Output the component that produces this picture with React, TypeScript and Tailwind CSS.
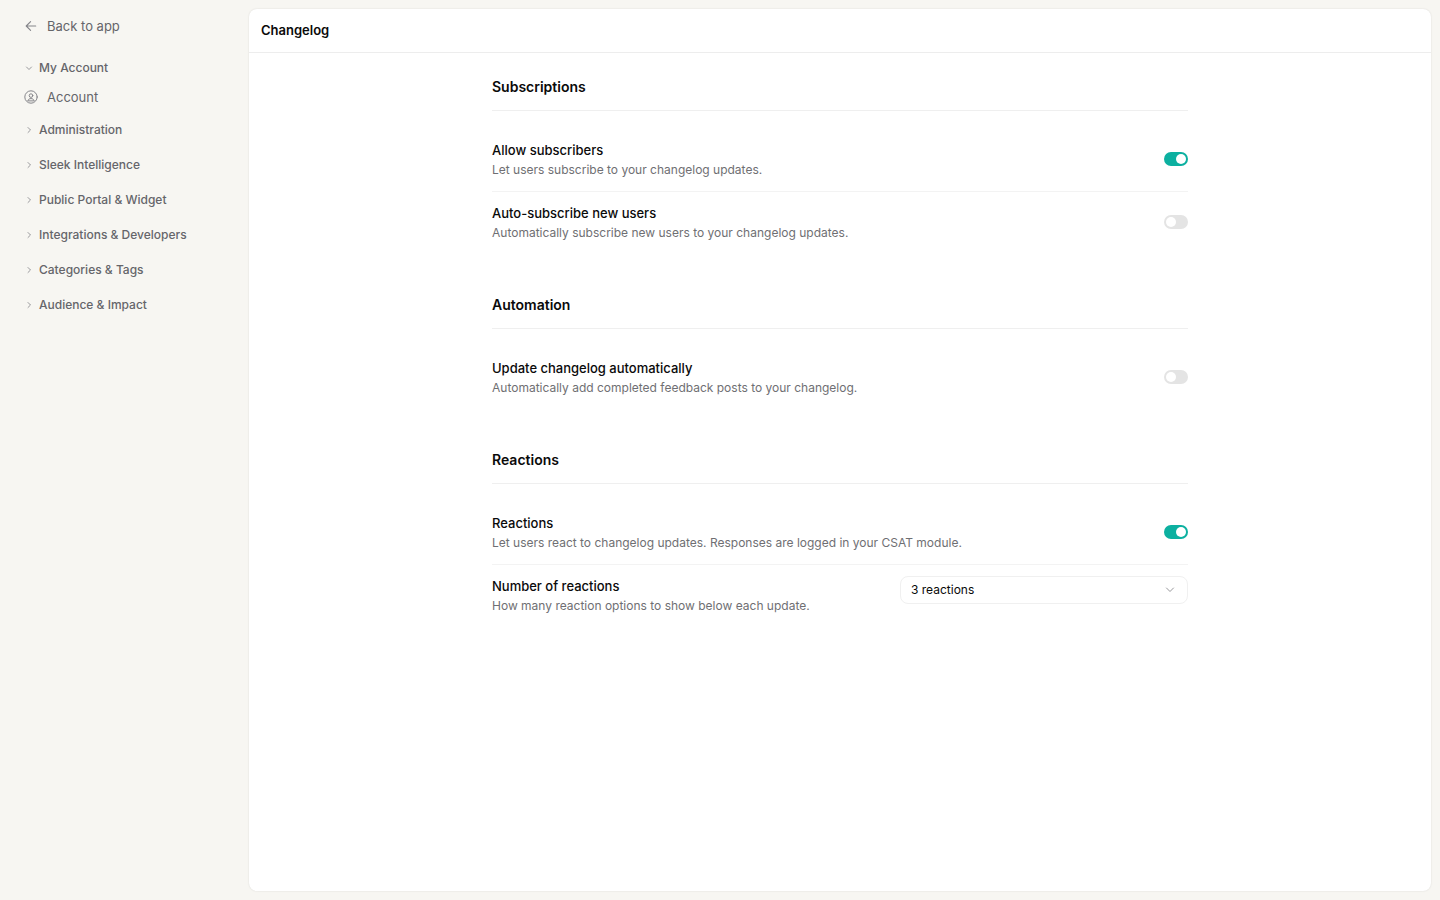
import { useState } from 'react';
import type { ReactNode } from 'react';

const groups = [
  'Administration',
  'Sleek Intelligence',
  'Public Portal & Widget',
  'Integrations & Developers',
  'Categories & Tags',
  'Audience & Impact',
];

function Chevron({ className, d = 'M4.8 3 7.8 6l-3 3' }: { className: string; d?: string }) {
  return (
    <svg viewBox="0 0 12 12" fill="none" stroke="currentColor" strokeLinecap="round" strokeLinejoin="round" className={className} aria-hidden="true">
      <path d={d} />
    </svg>
  );
}

function Sidebar() {
  return (
    <nav className="w-[249px] shrink-0 pt-3 pr-4 pl-6 text-[#65656a]">
      <a href="#app" className="flex h-7 items-center gap-[9px] text-[13px] leading-[21px]">
        <svg viewBox="0 0 14 14" fill="none" stroke="currentColor" strokeWidth="1.1" strokeLinecap="round" strokeLinejoin="round" className="size-3.5 text-[#85858a]" aria-hidden="true">
          <path d="M11.7 7H2.4M6.6 2.6 2.2 7l4.4 4.4" />
        </svg>
        Back to app
      </a>

      <button type="button" className="mt-4 flex h-6 items-center gap-[5px] text-xs font-medium">
        <Chevron className="size-2.5 text-[#85858a]" d="m3 4.8 3 3 3-3" />
        My Account
      </button>
      <a href="#account" className="mt-1 flex h-[26px] items-center gap-[9px] text-[13px] leading-[21px]">
        <svg viewBox="0 0 14 14" fill="none" stroke="currentColor" strokeLinecap="round" className="size-3.5 text-[#85858a]" aria-hidden="true">
          <circle cx="7" cy="7" r="6.2" />
          <circle cx="7" cy="5.6" r="1.8" />
          <path d="M3.9 10.5c.4-1.3 1.6-1.9 3.1-1.9s2.7.6 3.1 1.9Z" strokeLinejoin="round" />
        </svg>
        Account
      </a>

      <ul className="mt-2 space-y-[11px]">
        {groups.map((group) => (
          <li key={group}>
            <button type="button" className="flex h-6 items-center gap-[5px] text-xs font-medium">
              <Chevron className="size-2.5 text-[#85858a]" />
              {group}
            </button>
          </li>
        ))}
      </ul>
    </nav>
  );
}

function Toggle({ id, initial }: { id: string; initial: boolean }) {
  const [on, setOn] = useState(initial);

  return (
    <button
      id={id}
      type="button"
      role="switch"
      aria-checked={on}
      aria-labelledby={`${id}-label`}
      onClick={() => setOn(!on)}
      className={`mt-3 flex h-3.5 w-6 shrink-0 items-center rounded-full px-0.5 ${on ? 'justify-end bg-[#0cb0a0]' : 'justify-start bg-[#e4e4e4]'}`}
    >
      <span className="size-2.5 rounded-full bg-white" />
    </button>
  );
}

type RowProps = {
  id: string;
  title: string;
  description: string;
  children: ReactNode;
};

function Row({ id, title, description, children }: RowProps) {
  return (
    <div className="flex items-start justify-between gap-6 border-b border-[#f3f3f3] py-[11px] last:border-b-0">
      <div>
        <label id={`${id}-label`} htmlFor={id} className="block text-[13px] leading-5 font-medium text-[#0a0a0a]">
          {title}
        </label>
        <p className="text-xs leading-5 text-[#6f6f73]">{description}</p>
      </div>
      {children}
    </div>
  );
}

function Section({ title, children }: { title: string; children: ReactNode }) {
  return (
    <section>
      <h2 className="border-b border-[#efefef] pb-[11px] text-sm leading-6 font-semibold text-[#0a0a0a]">
        {title}
      </h2>
      <div className="mt-[18px]">{children}</div>
    </section>
  );
}

export default function App() {
  return (
    <div className="flex min-h-screen bg-[#f7f6f2] font-['Inter',sans-serif]">
      <Sidebar />
      <main className="my-[9px] mr-[9px] flex-1 rounded-lg bg-white shadow-[0_0_2px_rgba(0,0,0,0.12)]">
        <header className="flex h-11 items-center border-b border-[#ededed] px-3">
          <h1 className="text-[13px] font-semibold text-[#0a0a0a]">Changelog</h1>
        </header>

        <div className="mx-auto max-w-[696px] space-y-[39px] pt-[22px] pb-10">
          <Section title="Subscriptions">
            <Row id="allow" title="Allow subscribers" description="Let users subscribe to your changelog updates.">
              <Toggle id="allow" initial={true} />
            </Row>
            <Row id="auto" title="Auto-subscribe new users" description="Automatically subscribe new users to your changelog updates.">
              <Toggle id="auto" initial={false} />
            </Row>
          </Section>

          <Section title="Automation">
            <Row id="update" title="Update changelog automatically" description="Automatically add completed feedback posts to your changelog.">
              <Toggle id="update" initial={false} />
            </Row>
          </Section>

          <Section title="Reactions">
            <Row id="reactions" title="Reactions" description="Let users react to changelog updates. Responses are logged in your CSAT module.">
              <Toggle id="reactions" initial={true} />
            </Row>
            <Row id="count" title="Number of reactions" description="How many reaction options to show below each update.">
              <div className="relative w-72 shrink-0">
                <select
                  id="count"
                  defaultValue="3"
                  className="block h-7 w-full appearance-none rounded-lg border border-[#f0f0f0] bg-white px-2.5 text-xs text-[#0a0a0a]"
                >
                  <option value="3">3 reactions</option>
                </select>
                <Chevron className="pointer-events-none absolute top-2 right-3 size-3 text-[#98989c]" d="M2.5 4 6 7.5 9.5 4" />
              </div>
            </Row>
          </Section>
        </div>
      </main>
    </div>
  );
}
